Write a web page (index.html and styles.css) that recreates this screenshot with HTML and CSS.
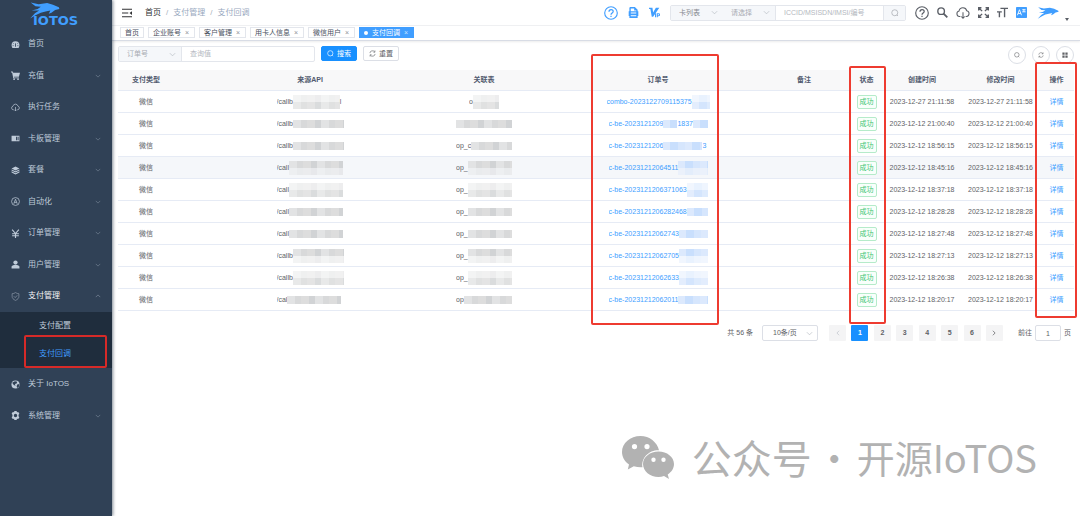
FILE: index.html
```html
<!DOCTYPE html>
<html lang="zh-CN">
<head>
    <meta charset="UTF-8">
    <title>IoTOS - 支付回调</title>
    <link rel="stylesheet" href="styles.css">
</head>
<body>
    <svg class="sprite" aria-hidden="true">
        <symbol id="i-cheetah" viewBox="0 0 58 32"><path d="M3 1 L18 4 L34 2 L45 5 L56 10 L57 13 L49 15 L42 20 L37 22 L40 16 L31 18 L22 20 L12 25 L2 31 L11 21 L19 16 L5 16 L16 13 L22 9 L12 8 Z"/></symbol>
        <symbol id="i-home" viewBox="0 0 16 16"><path d="M8 2a7 7 0 0 0-7 7c0 2 .6 3.400 1.500 5h11c.9-1.600 1.500-3 1.500-5a7 7 0 0 0-7-7z"/><path d="M8 12V6M4 6l1 1M12 6l-1 1M3 10h1.500M11.500 10H13" stroke="#304156" stroke-width="1.500"/></symbol>
        <symbol id="i-cart" viewBox="0 0 16 16"><path d="M0 1h3l1 2h12l-2 7H5l.5 1.500H14V13H4L2 2.500H0z"/><circle cx="5.500" cy="14.500" r="1.500"/><circle cx="12.500" cy="14.500" r="1.500"/></symbol>
        <symbol id="i-cloud" viewBox="0 0 16 16"><path d="M5 12H4a3.200 3.200 0 0 1-.5-6.300A4.500 4.500 0 0 1 12.300 5.500 3.300 3.300 0 0 1 12 12h-1M8 7v7M6 12l2 2 2-2" fill="none" stroke="currentColor" stroke-width="1.200"/></symbol>
        <symbol id="i-card" viewBox="0 0 16 16"><path fill-rule="evenodd" d="M1 3h14v10H1zM9 5v6h2V5zm3 0v6h1.500V5z"/></symbol>
        <symbol id="i-box" viewBox="0 0 16 16"><path d="M8 1l7 3.500-7 3.500-7-3.500zM1 6l7 3.500L15 6v2l-7 3.500L1 8zM1 9.500L8 13l7-3.500v2L8 15l-7-3.500z"/></symbol>
        <symbol id="i-auto" viewBox="0 0 16 16"><g fill="none" stroke="currentColor" stroke-width="1.300"><circle cx="8" cy="8" r="7"/><path d="M5 12l3-8 3 8M6 9.500h4"/></g></symbol>
        <symbol id="i-yen" viewBox="0 0 16 16"><path d="M2 1l6 7 6-7M8 8v8M2 8.500h12M2 12h12" fill="none" stroke="currentColor" stroke-width="2"/></symbol>
        <symbol id="i-user" viewBox="0 0 16 16"><circle cx="8" cy="4.500" r="3.800"/><path d="M1 15v-3c0-2 3-3 7-3s7 1 7 3v3z"/></symbol>
        <symbol id="i-shield" viewBox="0 0 16 16"><path d="M8 1c2 1.500 4 2 6 2v5c0 3-2 5-6 7-4-2-6-4-6-7V3c2 0 4-.5 6-2zM5 7.500L7.500 10 11 6" fill="none" stroke="currentColor" stroke-width="1.200"/></symbol>
        <symbol id="i-globe" viewBox="0 0 16 16"><circle cx="8" cy="8" r="7.200"/><path d="M7 2l4 1-1 3-3 1 1 3-3-1-3-4zM11 8l4-1-1 5-3 2-1-3z" fill="#304156"/></symbol>
        <symbol id="i-gear" viewBox="0 0 16 16"><path fill-rule="evenodd" d="M6 0h4l.6 2.200 2.300-.6 2 3.400-1.500 1.700v2.600l1.500 1.700-2 3.400-2.300-.6L10 16H6l-.6-2.200-2.300.6-2-3.400 1.500-1.700V6.700L1.100 5l2-3.400 2.300.6zM8 5a3 3 0 1 0 0 6 3 3 0 0 0 0-6z"/></symbol>
        <symbol id="i-down" viewBox="0 0 16 16"><path d="M2 5l6 6 6-6" fill="none" stroke="currentColor" stroke-width="1.500"/></symbol>
        <symbol id="i-up" viewBox="0 0 16 16"><path d="M2 11l6-6 6 6" fill="none" stroke="currentColor" stroke-width="1.500"/></symbol>
        <symbol id="i-left" viewBox="0 0 16 16"><path d="M11 2L5 8l6 6" fill="none" stroke="currentColor" stroke-width="2"/></symbol>
        <symbol id="i-right" viewBox="0 0 16 16"><path d="M5 2l6 6-6 6" fill="none" stroke="currentColor" stroke-width="2"/></symbol>
        <symbol id="i-fold" viewBox="0 0 16 16"><path d="M0 1h16v1.800H0zM0 7h10v1.800H0zM0 13h16v1.800H0zM16 5v6l-4-3z"/></symbol>
        <symbol id="i-help" viewBox="0 0 16 16"><circle cx="8" cy="8" r="7.200" fill="none" stroke="currentColor" stroke-width="1.300"/><path d="M5.700 6.500C5.700 3.300 10.500 3.300 10.500 6.300c0 1.700-2.500 1.800-2.500 3.700M8 11v1.600" fill="none" stroke="currentColor" stroke-width="1.400"/></symbol>
        <symbol id="i-doc" viewBox="0 0 16 16"><path fill-rule="evenodd" d="M3 0h7l4 4v2h1v7h-1v3H2v-3H1V6h1V1zM4 2v4h8V5H9V2zM4 8v1.300h8V8zM4 12v1.500h8V12z"/></symbol>
        <symbol id="i-vip" viewBox="0 0 16 16"><path d="M0 1h5l1 7 4-7h5L6 14H4L2 3H0z"/><path d="M9.500 9v6M12 15V9.700h2a1.500 1.500 0 0 1 0 3h-2" fill="none" stroke="currentColor" stroke-width="1.500"/></symbol>
        <symbol id="i-search" viewBox="0 0 16 16"><g fill="none" stroke="currentColor" stroke-width="1.500"><circle cx="7.500" cy="7.500" r="6"/><path d="M12 12l2 2"/></g></symbol>
        <symbol id="i-find" viewBox="0 0 16 16"><g fill="none" stroke="currentColor" stroke-width="2"><circle cx="6" cy="6" r="4.800"/><path d="M9.500 9.500l5.500 5.500" stroke-width="2.600"/></g></symbol>
        <symbol id="i-full" viewBox="0 0 16 16"><path d="M1 5V1h4M11 1h4v4M15 11v4h-4M5 15H1v-4M1 1l5 5M15 1l-5 5M15 15l-5-5M1 15l5-5" fill="none" stroke="currentColor" stroke-width="2"/></symbol>
        <symbol id="i-size" viewBox="0 0 16 16"><path d="M5 2h11M11 2v13M0 7h7M3.500 7v8" fill="none" stroke="currentColor" stroke-width="2"/></symbol>
        <symbol id="i-lang" viewBox="0 0 16 16"><rect width="16" height="16" rx="1"/><path d="M2 12l3-8 3 8M3 9.500h4M9 4h5M9 7h5M11.500 3v4" fill="none" stroke="#fff" stroke-width="1.300"/></symbol>
        <symbol id="i-refresh" viewBox="0 0 16 16"><path d="M2 7a6 6 0 0 1 11-2.500M13.500 1v4H10M14 9a6 6 0 0 1-11 2.500M2.500 15v-4H6" fill="none" stroke="currentColor" stroke-width="1.400"/></symbol>
        <symbol id="i-grid" viewBox="0 0 16 16"><path d="M1 1h6v6H1zM9 1h6v6H9zM1 9h6v6H1zM9 9h6v6H9z"/></symbol>
        <symbol id="i-wechat" viewBox="0 0 52 43"><path fill-rule="evenodd" d="M18.500 0C8.300 0 0 7 0 16c0 5 2.600 9.400 7 12.400L5.800 33.500l6-3.200c3 .9 5.500 1.200 8.700 1C19 22 27 14 37 14.300 35 6 27.500 0 18.500 0zM12.500 8a2.600 2.600 0 1 1 0 5.200 2.600 2.600 0 0 1 0-5.200zM25 8a2.600 2.600 0 1 1 0 5.200A2.600 2.600 0 0 1 25 8z"/><path fill-rule="evenodd" d="M36.500 15.500C28 15.500 21 21 21 28s7 13 15.500 13c2 0 3.800-.3 5.500-.9l5 2.900-1.300-4.600C49.600 36 52 32.300 52 28c0-7-7-12.500-15.500-12.500zM31.500 21.500a2.200 2.200 0 1 1 0 4.400 2.200 2.200 0 0 1 0-4.400zm10 0a2.200 2.200 0 1 1 0 4.400 2.200 2.200 0 0 1 0-4.400z"/></symbol>
    </svg>

    <div class="app">
        <aside class="sidebar">
            <a class="logo" href="#">
                <svg class="logo-pic"><use href="#i-cheetah"/></svg>
                <span class="logo-text">IOTOS</span>
            </a>
            <nav class="menu">
                <a href="#"><svg><use href="#i-home"/></svg>首页</a>
                <a href="#"><svg><use href="#i-cart"/></svg>充值<svg class="arrow"><use href="#i-down"/></svg></a>
                <a href="#"><svg><use href="#i-cloud"/></svg>执行任务</a>
                <a href="#"><svg><use href="#i-card"/></svg>卡板管理<svg class="arrow"><use href="#i-down"/></svg></a>
                <a href="#"><svg><use href="#i-box"/></svg>套餐<svg class="arrow"><use href="#i-down"/></svg></a>
                <a href="#"><svg><use href="#i-auto"/></svg>自动化<svg class="arrow"><use href="#i-down"/></svg></a>
                <a href="#"><svg><use href="#i-yen"/></svg>订单管理<svg class="arrow"><use href="#i-down"/></svg></a>
                <a href="#"><svg><use href="#i-user"/></svg>用户管理<svg class="arrow"><use href="#i-down"/></svg></a>
                <a class="open" href="#"><svg><use href="#i-shield"/></svg>支付管理<svg class="arrow"><use href="#i-up"/></svg></a>
                <div class="submenu">
                    <a href="#">支付配置</a>
                    <a class="active" href="#">支付回调</a>
                    <div class="mark mark-menu"></div>
                </div>
                <a href="#"><svg><use href="#i-globe"/></svg>关于 IoTOS</a>
                <a href="#"><svg><use href="#i-gear"/></svg>系统管理<svg class="arrow"><use href="#i-down"/></svg></a>
            </nav>
        </aside>

        <main class="main">
            <header class="navbar">
                <button class="icon-btn fold" aria-label="折叠菜单"><svg><use href="#i-fold"/></svg></button>
                <div class="breadcrumb">
                    <a href="#">首页</a><i>/</i><span>支付管理</span><i>/</i><span>支付回调</span>
                </div>
                <div class="tools blue">
                    <button class="icon-btn big" aria-label="帮助"><svg><use href="#i-help"/></svg></button>
                    <button class="icon-btn" aria-label="文档"><svg><use href="#i-doc"/></svg></button>
                    <button class="icon-btn" aria-label="VIP"><svg><use href="#i-vip"/></svg></button>
                </div>
                <div class="group quick">
                    <label class="select dark"><select aria-label="列表类型"><option>卡列表</option></select><svg><use href="#i-down"/></svg></label>
                    <label class="select"><select aria-label="查询条件"><option>请选择</option></select><svg><use href="#i-down"/></svg></label>
                    <input type="text" aria-label="卡号" placeholder="ICCID/MSISDN/IMSI/编号">
                    <button class="append" aria-label="查询"><svg><use href="#i-search"/></svg></button>
                </div>
                <div class="tools right">
                    <button class="icon-btn big" aria-label="帮助中心"><svg><use href="#i-help"/></svg></button>
                    <button class="icon-btn" aria-label="搜索菜单"><svg><use href="#i-find"/></svg></button>
                    <button class="icon-btn big" aria-label="下载"><svg><use href="#i-cloud"/></svg></button>
                    <button class="icon-btn" aria-label="全屏"><svg><use href="#i-full"/></svg></button>
                    <button class="icon-btn" aria-label="字号"><svg><use href="#i-size"/></svg></button>
                    <button class="icon-btn lang" aria-label="语言"><svg><use href="#i-lang"/></svg></button>
                </div>
                <button class="avatar" aria-label="账号"><svg><use href="#i-cheetah"/></svg><span class="caret"></span></button>
            </header>

            <nav class="tags">
                <a href="#">首页</a>
                <a href="#">企业账号<b>×</b></a>
                <a href="#">客户管理<b>×</b></a>
                <a href="#">用卡人信息<b>×</b></a>
                <a href="#">微信用户<b>×</b></a>
                <a class="active" href="#">支付回调<b>×</b></a>
            </nav>

            <section class="content">
                <form class="filter">
                    <div class="group">
                        <label class="select wide"><select aria-label="查询字段"><option>订单号</option></select><svg><use href="#i-down"/></svg></label>
                        <input type="text" aria-label="查询值" placeholder="查询值">
                    </div>
                    <button class="btn primary" type="button"><svg><use href="#i-search"/></svg>搜索</button>
                    <button class="btn" type="button"><svg><use href="#i-refresh"/></svg>重置</button>
                    <div class="round-tools">
                        <button type="button" aria-label="隐藏搜索"><svg><use href="#i-search"/></svg></button>
                        <button type="button" aria-label="刷新"><svg><use href="#i-refresh"/></svg></button>
                        <button type="button" aria-label="显隐列"><svg><use href="#i-grid"/></svg></button>
                    </div>
                </form>

                <div class="table-wrap">
                    <table>
                        <colgroup>
                            <col class="c-type"><col class="c-api"><col class="c-rel"><col class="c-order"><col class="c-note">
                            <col class="c-state"><col class="c-time"><col class="c-time2"><col class="c-op">
                        </colgroup>
                        <thead>
                            <tr><th class="type">支付类型</th><th>来源API</th><th>关联表</th><th>订单号</th><th>备注</th><th>状态</th><th>创建时间</th><th>修改时间</th><th>操作</th></tr>
                        </thead>
                        <tbody id="rows"></tbody>
                    </table>
                    <div class="mark mark-order"></div>
                    <div class="mark mark-state"></div>
                    <div class="mark mark-op"></div>
                </div>

                <div class="pagination">
                    <span>共 56 条</span>
                    <label class="select size"><select aria-label="每页条数"><option>10条/页</option></select><svg><use href="#i-down"/></svg></label>
                    <div class="pager">
                        <button disabled aria-label="上一页"><svg><use href="#i-left"/></svg></button>
                        <button class="current">1</button>
                        <button>2</button>
                        <button>3</button>
                        <button>4</button>
                        <button>5</button>
                        <button>6</button>
                        <button aria-label="下一页"><svg><use href="#i-right"/></svg></button>
                    </div>
                    <label class="jump">前往<input type="text" value="1">页</label>
                </div>
            </section>
        </main>
    </div>

    <div class="watermark">
        <svg><use href="#i-wechat"/></svg>
        <span class="wm-label">公众号</span>
        <span class="wm-dot">·</span>
        <span class="wm-name">开源IoTOS</span>
    </div>

    <script src="script.js"></script>
</body>
</html>
```
FILE: styles.css
```css
* {
    box-sizing: border-box;
}

body {
    margin: 0;
    background: #fff;
    color: #606266;
    font-family: "Liberation Sans", "Noto Sans CJK SC", sans-serif;
    font-size: 7px;
    line-height: 10px;
}

a {
    color: inherit;
    text-decoration: none;
}

svg {
    fill: currentColor;
    flex: none;
    width: 8px;
    height: 8px;
}

button, input, select {
    font: inherit;
    color: inherit;
    margin: 0;
    padding: 0;
    border: 0;
    background: none;
    outline: none;
}

button {
    display: flex;
    align-items: center;
    justify-content: center;
    cursor: pointer;
}

.sprite {
    display: none;
}

.app {
    display: flex;
    min-height: 100vh;
}

/* sidebar */
.sidebar {
    width: 112px;
    flex: none;
    background: #304156;
    color: #bfcbd9;
    font-size: 8px;
    box-shadow: 1px 0 3px rgba(0, 21, 41, 0.5);
    z-index: 1;
}

.logo {
    display: flex;
    flex-direction: column;
    align-items: flex-start;
    height: 28px;
    padding: 2px 0 0 29px;
    color: #409eff;
}

.logo-pic {
    width: 31px;
    height: 17px;
}

.logo-text {
    font: bold 13px/12px "DejaVu Sans", sans-serif;
    margin: -4px 0 0 4px;
}

.menu > a {
    display: flex;
    align-items: center;
    gap: 8px;
    height: 31px;
    padding: 0 11px;
}

.menu > a:nth-child(odd) {
    height: 32px;
}

.menu svg {
    width: 9px;
    height: 9px;
}

.menu .arrow {
    width: 6px;
    height: 6px;
    margin-left: auto;
    color: #8391a1;
}

.menu .open {
    color: #f4f4f5;
}

.menu .open svg {
    color: #8f9bab;
}

.submenu {
    position: relative;
    background: #1f2d3d;
}

.submenu a {
    display: block;
    padding-left: 39px;
    line-height: 28px;
}

.submenu .active {
    color: #409eff;
}

/* red outlines */
.mark {
    position: absolute;
    border: 2px solid #ee3b30;
    border-radius: 2px;
    pointer-events: none;
}

.mark-menu {
    top: 23px;
    right: 5px;
    bottom: 0;
    left: 24px;
    border-color: #d62a28;
}

.mark-order {
    top: -16px;
    left: 49.5%;
    width: 128px;
    height: 271px;
}

.mark-state {
    top: -4px;
    right: 188px;
    width: 37px;
    height: 258px;
}

.mark-op {
    top: -8px;
    right: -3px;
    width: 42px;
    height: 256px;
}

/* top bar */
.main {
    flex: 1;
    min-width: 0;
}

.navbar {
    display: flex;
    align-items: center;
    height: 26px;
    padding: 0 11px 0 10px;
    border-bottom: 1px solid #f0f1f3;
}

.icon-btn svg {
    width: 11px;
    height: 11px;
}

.icon-btn.big svg {
    width: 14px;
    height: 14px;
}

.icon-btn.fold svg {
    width: 10px;
    height: 10px;
}

.icon-btn.lang {
    color: #409eff;
}

.fold {
    color: #303133;
}

.breadcrumb {
    flex: 1;
    margin-left: 13px;
    color: #97a8be;
    font-size: 8px;
}

.breadcrumb a {
    color: #303133;
}

.breadcrumb i {
    margin: 0 5px;
    font-style: normal;
    color: #a8b0bc;
}

.tools {
    display: flex;
    align-items: center;
    gap: 10px;
    color: #5a5e66;
}

.tools.blue {
    color: #409eff;
}

.tools.right {
    gap: 8px;
}

.avatar {
    color: #409eff;
    margin-left: 10px;
}

.avatar svg {
    width: 22px;
    height: 16px;
}

.caret {
    align-self: flex-end;
    margin-left: 6px;
    border: 2px solid transparent;
    border-top: 3px solid #5a5e66;
    border-bottom: 0;
}

.group {
    display: flex;
    height: 16px;
    border: 1px solid #e3e6ec;
    border-radius: 2px;
    overflow: hidden;
    color: #a8abb2;
}

.group input {
    width: 133px;
    padding: 0 8px;
    border-left: 1px solid #e3e6ec;
}

.quick {
    margin: 0 9px 0 10px;
}

.quick input {
    width: 108px;
}

.group .append {
    width: 22px;
    background: #f5f7fa;
    border-left: 1px solid #e3e6ec;
}

::placeholder {
    color: #b4b8c0;
    opacity: 1;
}

.select {
    display: flex;
    align-items: center;
    width: 52px;
    padding: 0 5px 0 8px;
    background: #f5f7fa;
}

.select select {
    flex: 1;
    min-width: 0;
    appearance: none;
}

.select svg {
    width: 7px;
    height: 7px;
    color: #b4b8c0;
}

.select.dark {
    color: #85888e;
}

.select.wide {
    width: 62px;
}

/* opened pages */
.tags {
    display: flex;
    gap: 4px;
    height: 15px;
    padding: 1px 8px 2px;
    border-bottom: 1px solid #d8dce5;
    box-shadow: 0 1px 2px rgba(0, 0, 0, 0.08);
    color: #495060;
}

.tags a {
    display: flex;
    align-items: center;
    gap: 4px;
    padding: 0 4px;
    border: 1px solid #e3e6ec;
}

.tags b {
    width: 5px;
    font-weight: normal;
    color: #909399;
}

.tags .active {
    background: #409eff;
    border-color: #409eff;
    color: #fff;
}

.tags .active::before {
    content: "";
    width: 4px;
    height: 4px;
    border-radius: 50%;
    background: #fff;
}

.tags .active b {
    color: #c6e2ff;
}

/* filter */
.content {
    padding: 5px 6px 0 6px;
}

.filter {
    display: flex;
    gap: 6px;
    height: 24px;
}

.btn {
    gap: 3px;
    width: 36px;
    height: 15px;
    border: 1px solid #dcdfe6;
    border-radius: 2px;
}

.btn svg {
    width: 7px;
    height: 7px;
}

.btn.primary {
    border-color: #1890ff;
    background: #1890ff;
    color: #fff;
}

.round-tools {
    display: flex;
    gap: 6px;
    margin-left: auto;
}

.round-tools button {
    width: 18px;
    height: 18px;
    border: 1px solid #dcdfe6;
    border-radius: 50%;
}

.round-tools svg {
    width: 6px;
    height: 6px;
}

/* table */
.table-wrap {
    position: relative;
}

table {
    width: 100%;
    table-layout: fixed;
    border-collapse: separate;
    border-spacing: 0;
}

.c-type { width: 93px; }
.c-api { width: 198px; }
.c-rel { width: 150px; }
.c-order { width: 198px; }
.c-note { width: 94px; }
.c-state { width: 31px; }
.c-time { width: 80px; }
.c-time2 { width: 77px; }
.c-op { width: 35px; }

th, td {
    height: 22px;
    padding: 0;
    border-bottom: 1px solid #e6ebf5;
    text-align: center;
    white-space: nowrap;
}

th {
    height: 21px;
    background: #f8f8f9;
    color: #515a6e;
}

.type {
    padding-right: 37px;
}

tr.hover td {
    background: #f5f7fa;
}

td a {
    color: #409eff;
}

.tag {
    display: inline-block;
    width: 20px;
    height: 14px;
    line-height: 12px;
    border: 1px solid #b5ebca;
    border-radius: 2px;
    background: #f8fffb;
    color: #3fc574;
    vertical-align: middle;
}

/* hidden values */
.masked {
    display: inline-flex;
    align-items: center;
    height: 14px;
    overflow: hidden;
    vertical-align: middle;
}

.masked.api { width: 67px; }
.masked.rel { width: 56px; }
.masked.rel.short { width: 30px; }
.masked.order { width: 99px; }
.masked.order.long { width: 103px; }

.mosaic {
    flex: none;
    height: 8px;
    background: repeating-linear-gradient(90deg, #e2e3e4 0 8px, #d8d9da 8px 14px, #dddddd 14px 22px, #d1d3d5 22px 28px);
}

.mosaic.up, .mosaic.down {
    height: 14px;
    -webkit-mask: linear-gradient(#000 50%, rgba(0, 0, 0, 0.4) 50%);
    mask: linear-gradient(#000 50%, rgba(0, 0, 0, 0.4) 50%);
}

.mosaic.down {
    -webkit-mask: linear-gradient(rgba(0, 0, 0, 0.4) 50%, rgba(0, 0, 0, 0.8) 50%);
    mask: linear-gradient(rgba(0, 0, 0, 0.4) 50%, rgba(0, 0, 0, 0.8) 50%);
}

.order .mosaic {
    background: repeating-linear-gradient(90deg, #dce9fd 0 7px, #c9dffd 7px 15px, #d6e6fd 15px 22px);
}

/* pagination */
.pagination {
    display: flex;
    justify-content: flex-end;
    align-items: center;
    margin-top: 14px;
    padding-right: 3px;
}

.select.size {
    width: 56px;
    height: 16px;
    margin: 0 11px 0 9px;
    padding: 0 4px 0 10px;
    border: 1px solid #dcdfe6;
    border-radius: 2px;
    background: #fff;
}

.pager {
    display: flex;
    justify-content: space-between;
    width: 174px;
}

.pager button {
    width: 17px;
    height: 16px;
    border-radius: 1px;
    background: #f4f4f5;
    font-weight: bold;
}

.pager svg {
    width: 6px;
    height: 6px;
}

.pager button:disabled {
    color: #c0c4cc;
}

.pager .current {
    background: #1890ff;
    color: #fff;
}

.jump {
    display: flex;
    align-items: center;
    gap: 3px;
    margin-left: 15px;
}

.jump input {
    width: 26px;
    height: 16px;
    border: 1px solid #dcdfe6;
    border-radius: 2px;
    text-align: center;
}

/* watermark */
.watermark {
    position: absolute;
    right: 43px;
    bottom: 32px;
    display: flex;
    align-items: center;
    color: #b2b2b2;
    font-family: "Noto Sans CJK SC", sans-serif;
    font-size: 38px;
    line-height: 54px;
}

.watermark svg {
    width: 52px;
    height: 43px;
    margin-right: 18px;
}

.wm-label {
    font-size: 40px;
}

.wm-dot {
    width: 45px;
    text-align: center;
}
```
FILE: script.js
```javascript
// order: text pieces and mask widths in px, m = mosaic look of the row
var rows = [
    { api: "/callb", apiEnd: "l", rel: "o", order: ["combo-2023122709115375", 22], m: "down", time: "2023-12-27 21:11:58" },
    { api: "/callb", rel: "", order: ["c-be-2023121209", 14, "1837", 20], m: "", time: "2023-12-12 21:00:40" },
    { api: "/callb", rel: "op_c", order: ["c-be-2023121206", 39, "3"], m: "", time: "2023-12-12 18:56:15" },
    { api: "/call", rel: "op_", order: ["c-be-20231212064511", 32], m: "up", time: "2023-12-12 18:45:16", hover: true },
    { api: "/call", rel: "op_", order: ["c-be-2023121206371063", 24], m: "down", time: "2023-12-12 18:37:18" },
    { api: "/call", rel: "op_", order: ["c-be-2023121206282468", 25], m: "", time: "2023-12-12 18:28:28" },
    { api: "/call", rel: "op_", order: ["c-be-20231212062743", 32], m: "", time: "2023-12-12 18:27:48" },
    { api: "/callb", rel: "op_", order: ["c-be-20231212062705", 30], m: "up", time: "2023-12-12 18:27:13" },
    { api: "/callb", rel: "op_", order: ["c-be-20231212062633", 30], m: "down", time: "2023-12-12 18:26:38" },
    { api: "/cal", rel: "op", order: ["c-be-20231212062011", 32], m: "", time: "2023-12-12 18:20:17" }
];

function mosaic(width, look) {
    return '<i class="mosaic ' + look + '" style="width:' + width + 'px"></i>';
}

function masked(cls, parts, look) {
    var html = parts.map(function (p) {
        return typeof p === "number" ? mosaic(p, look) : "<span>" + p + "</span>";
    }).join("");
    return '<span class="masked ' + cls + '">' + html + "</span>";
}

document.getElementById("rows").innerHTML = rows.map(function (r, n) {
    var api = r.apiEnd ? [r.api, 47, r.apiEnd] : [r.api, 54];
    return '<tr class="' + (r.hover ? "hover" : "") + '">' +
        '<td class="type">微信</td>' +
        "<td>" + masked("api", api, r.m) + "</td>" +
        "<td>" + masked(n === 0 ? "rel short" : "rel", [r.rel, 56], r.m) + "</td>" +
        '<td><a href="#">' + masked(n === 0 ? "order long" : "order", r.order, r.m) + "</a></td>" +
        "<td></td>" +
        '<td><span class="tag">成功</span></td>' +
        "<td>" + r.time + "</td>" +
        "<td>" + r.time + "</td>" +
        '<td><a href="#">详情</a></td>' +
        "</tr>";
}).join("");
```
